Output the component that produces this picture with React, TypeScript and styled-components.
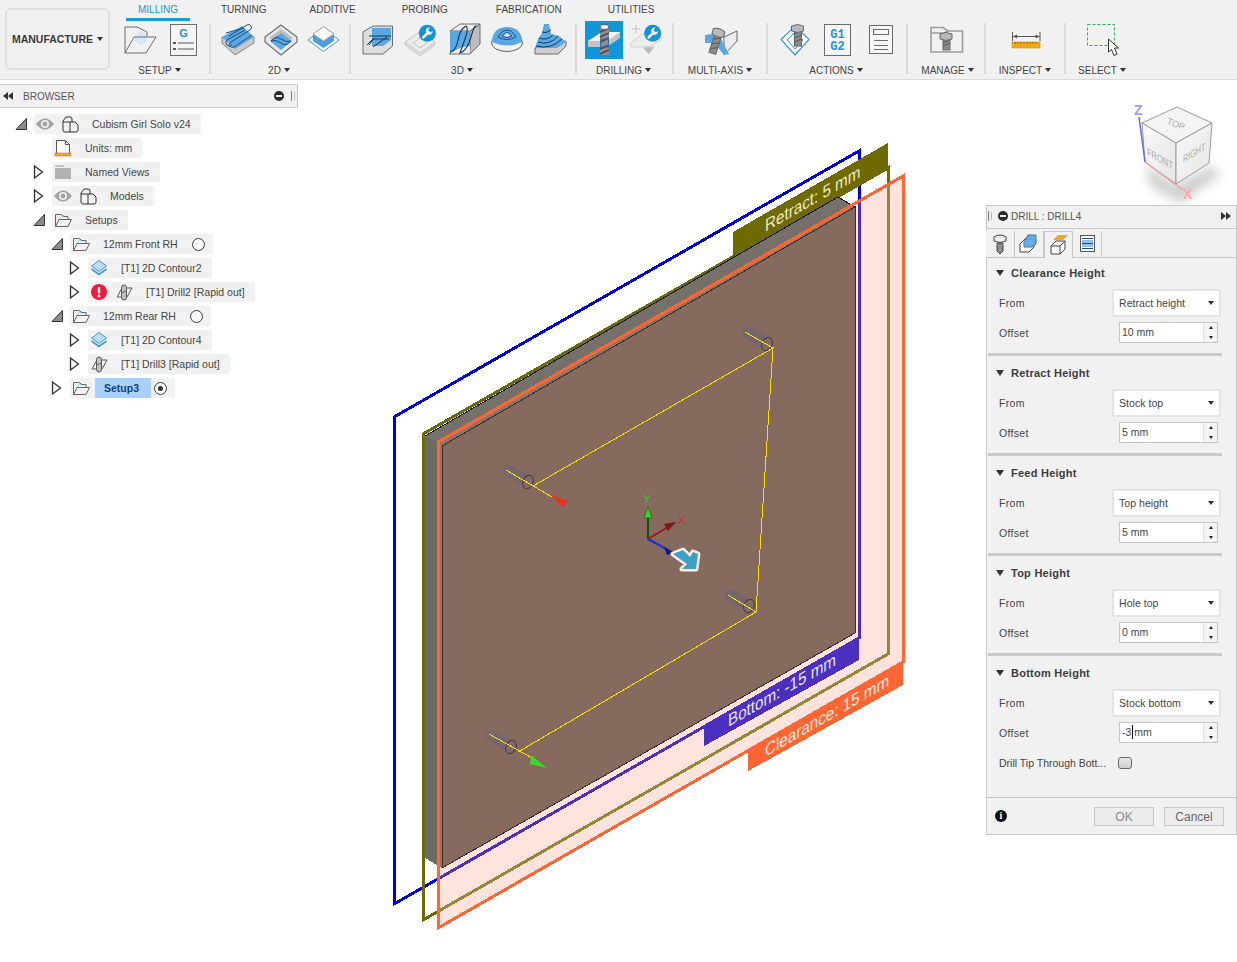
import React from 'react';
import styled, { createGlobalStyle } from 'styled-components';

const GlobalStyle = createGlobalStyle`
	html, body {
		margin: 0;
		padding: 0;
		background: #fff;
		font-family: 'Liberation Sans', Arial, sans-serif;
	}
`;

const Page = styled.div`
	width: 1237px;
	height: 962px;
	overflow: hidden;
	color: #3d3d3d;
`;

/* toolbar */
const Toolbar = styled.div`
	display: flex;
	height: 79px;
	background: #f1f1f1;
	border-bottom: 1px solid #dadada;
`;
const ManufactureButton = styled.div`
	box-sizing: border-box;
	width: 105px;
	height: 62px;
	margin: 8px 3px 0 5px;
	display: flex;
	align-items: center;
	justify-content: center;
	gap: 4px;
	border: 2px solid #dfdfdf;
	border-radius: 6px;
	font-size: 10.5px;
	font-weight: bold;
	color: #3a3a3a;
`;
const ToolbarBody = styled.div`
	display: flex;
	flex-direction: column;
`;
const TabRow = styled.div`
	display: flex;
	gap: 19px;
	height: 22px;
	margin-left: 13px;
`;
const Tab = styled.div<{ $active?: boolean; $shift?: number }>`
	height: 16px;
	margin-left: ${(p) => p.$shift ?? 0}px;
	padding: 2px 12px 0;
	line-height: 16px;
	font-size: 10px;
	color: ${(p) => (p.$active ? '#1a9ad6' : '#444')};
	border-bottom: ${(p) => (p.$active ? '3px solid #1a9ad6' : '3px solid transparent')};
`;
const GroupRow = styled.div`
	display: flex;
`;
const Group = styled.div<{ $width: number }>`
	width: ${(p) => p.$width}px;
	display: flex;
	flex-direction: column;
	align-items: center;
`;
const IconRow = styled.div`
	display: flex;
	gap: 5px;
	height: 38px;
`;
const Slot = styled.svg`
	display: block;
	width: 38px;
	height: 38px;
	overflow: visible;
`;
const GroupLabel = styled.div<{ $shift?: number }>`
	display: flex;
	align-items: center;
	gap: 3px;
	height: 20px;
	margin: 1px 0 0 ${(p) => p.$shift ?? 0}px;
	padding-right: 4px;
	font-size: 10px;
	color: #444;
`;
const Caret = styled.span`
	display: inline-block;
	width: 0;
	height: 0;
	border-left: 3px solid transparent;
	border-right: 3px solid transparent;
	border-top: 4px solid #333;
`;
const Separator = styled.div`
	width: 2px;
	height: 51px;
	margin: 2px 1px 0 -1px;
	background: #dcdcdc;
`;

/* workspace */
const Workspace = styled.div`
	position: relative;
	height: 882px;
`;
const Canvas = styled.svg`
	position: absolute;
	left: 0;
	top: 0;
	width: 1237px;
	height: 882px;
`;

/* browser tree */
const Browser = styled.div`
	position: absolute;
	left: 0;
	top: 4px;
	width: 298px;
`;
const BrowserHeader = styled.div`
	box-sizing: border-box;
	display: flex;
	align-items: center;
	height: 24px;
	padding: 0 2px 0 3px;
	background: #f1f1f1;
	border: 1px solid #c9c9c9;
	border-left: none;
	font-size: 10px;
	color: #555;
`;
const HeaderTitle = styled.span`
	margin-left: 10px;
	flex: 1;
`;
const HeaderGap = styled.span<{ $width: number }>`
	width: ${(p) => p.$width}px;
`;
const Tree = styled.div`
	margin-top: 4px;
`;
const TreeRow = styled.div<{ $indent: number }>`
	display: flex;
	align-items: center;
	height: 24px;
	padding-left: ${(p) => p.$indent}px;
`;
const ToggleCell = styled.div`
	width: 19px;
	flex: none;
`;
const ToggleSvg = styled.svg`
	display: block;
`;
const TreeBlock = styled.div`
	display: flex;
	align-items: center;
	gap: 3px;
	height: 20px;
	background: #f2f2f2;
`;
const TreeGlyph = styled.svg`
	display: block;
	width: 22px;
	height: 20px;
`;
const TreeLabel = styled.span<{ $tail: number }>`
	margin-left: 8px;
	padding-right: ${(p) => p.$tail}px;
	font-size: 10.5px;
	line-height: 20px;
	color: #444;
	white-space: nowrap;
`;
const ActiveLabel = styled.span`
	padding: 0 12px 0 9px;
	font-size: 10.5px;
	font-weight: bold;
	line-height: 20px;
	color: #123c7c;
	background: #a9d1fb;
`;
const Radio = styled.span<{ $on?: boolean }>`
	box-sizing: border-box;
	display: flex;
	align-items: center;
	justify-content: center;
	width: 13px;
	height: 13px;
	margin-right: 8px;
	border: 1px solid #3d3d3d;
	border-radius: 50%;
	background: #fafafa;
	&::after {
		content: '';
		display: ${(p) => (p.$on ? 'block' : 'none')};
		width: 5px;
		height: 5px;
		border-radius: 50%;
		background: #333;
	}
`;

/* drill dialog */
const Panel = styled.div`
	position: absolute;
	left: 986px;
	top: 125px;
	box-sizing: border-box;
	width: 251px;
	height: 630px;
	display: flex;
	flex-direction: column;
	background: #f1f1f1;
	border: 1px solid #c8c8c8;
`;
const PanelHeader = styled.div`
	display: flex;
	align-items: center;
	box-sizing: border-box;
	height: 23px;
	padding: 0 5px 2px 1px;
	border-bottom: 1px solid #c8c8c8;
	font-size: 10px;
	color: #555;
`;
const PanelTitle = styled.span`
	flex: 1;
`;
const PanelTabs = styled.div`
	display: flex;
	height: 28px;
	margin-left: -1px;
	border-bottom: 1px solid #c4c4c4;
`;
const PanelTab = styled.div<{ $active?: boolean }>`
	box-sizing: border-box;
	width: 29px;
	height: ${(p) => (p.$active ? '27px' : '26px')};
	margin-top: 2px;
	margin-bottom: ${(p) => (p.$active ? '-1px' : '0')};
	border-right: 1px solid #c8c8c8;
	border-left: ${(p) => (p.$active ? '1px solid #c8c8c8' : 'none')};
	border-top: ${(p) => (p.$active ? '1px solid #c8c8c8' : 'none')};
	background: #f1f1f1;
`;
const Section = styled.div`
	padding-top: 5px;
`;
const SectionHead = styled.div`
	display: flex;
	align-items: center;
	gap: 7px;
	height: 20px;
	margin: 0 0 6px 9px;
	font-size: 11px;
	font-weight: bold;
	letter-spacing: 0.25px;
	color: #3d3d3d;
`;
const SectionCaret = styled.span`
	width: 0;
	height: 0;
	border-left: 4.5px solid transparent;
	border-right: 4.5px solid transparent;
	border-top: 6px solid #333;
`;
const FieldRow = styled.div<{ $height: number; $gap?: number }>`
	display: flex;
	align-items: center;
	height: ${(p) => p.$height}px;
	margin-top: ${(p) => p.$gap ?? 0}px;
	padding-left: 12px;
	font-size: 10.5px;
	color: #444;
`;
const FieldLabel = styled.span<{ $tight?: boolean }>`
	width: 113px;
	flex: none;
	letter-spacing: ${(p) => (p.$tight ? '0' : '0.3px')};
	white-space: nowrap;
`;
const SelectBox = styled.div`
	box-sizing: border-box;
	display: flex;
	align-items: center;
	justify-content: space-between;
	width: 109px;
	height: 28px;
	padding: 0 5px 0 5px;
	background: #fff;
	border: 2px solid #e4e4e4;
	border-radius: 2px;
	letter-spacing: 0.05px;
`;
const NumberBox = styled.div`
	box-sizing: border-box;
	display: flex;
	align-items: center;
	width: 99px;
	height: 21px;
	margin-left: 7px;
	padding-left: 2px;
	background: #fff;
	border: 1px solid #c6c6c6;
`;
const NumberValue = styled.span`
	flex: 1;
	display: flex;
	align-items: center;
	padding-bottom: 1px;
	white-space: pre;
`;
const TextCursor = styled.span`
	width: 1px;
	height: 14px;
	margin: 0 1px;
	background: #111;
`;
const Spinner = styled.div`
	width: 13px;
	height: 19px;
	display: flex;
	flex-direction: column;
	border-left: 1px solid #e2e2e2;
	background: #f4f4f4;
`;
const SpinCell = styled.div`
	flex: 1;
	display: flex;
	align-items: center;
	justify-content: center;
`;
const SpinUp = styled.span`
	border-left: 2.5px solid transparent;
	border-right: 2.5px solid transparent;
	border-bottom: 3px solid #222;
`;
const SpinDown = styled.span`
	border-left: 2.5px solid transparent;
	border-right: 2.5px solid transparent;
	border-top: 3px solid #222;
`;
const Divider = styled.div`
	height: 3px;
	margin: 10px 14px 2px 1px;
	background: #c9c9c9;
`;
const CheckBox = styled.span`
	box-sizing: border-box;
	width: 14px;
	height: 12px;
	margin-left: 6px;
	border: 1px solid #666;
	border-radius: 3px;
	background: linear-gradient(#e8e8e8, #cfcfcf);
`;
const Footer = styled.div`
	margin-top: auto;
	display: flex;
	align-items: center;
	height: 37px;
	padding: 0 12px 0 8px;
	box-sizing: border-box;
	border-top: 1px solid #c2c2c2;
`;
const InfoDot = styled.span`
	width: 12px;
	height: 12px;
	border-radius: 50%;
	background: #111;
	color: #fff;
	font-size: 10px;
	font-weight: bold;
	line-height: 12px;
	text-align: center;
	font-family: 'Liberation Serif', serif;
`;
const FooterButton = styled.div<{ $disabled?: boolean }>`
	box-sizing: border-box;
	width: 60px;
	height: 19px;
	margin-left: ${(p) => (p.$disabled ? 'auto' : '10px')};
	border: 1px solid #c6c6c6;
	background: #ececec;
	font-size: 12px;
	line-height: 18px;
	text-align: center;
	color: ${(p) => (p.$disabled ? '#8a8a8a' : '#666')};
`;

const BLUE = '#5aa7e2';
const DEEP = '#1c4f80';
const LINE = '#6c6c6c';

function Wrench({ x, y }: { x: number; y: number }) {
	return (
		<g transform={`translate(${x} ${y})`}>
			<circle r="8.5" fill="#1593d8" />
			<path d="M-4 4 L1 -1" stroke="#fff" strokeWidth="2.6" strokeLinecap="round" />
			<path d="M4.6 -4.6 L2 -2 L0.6 -3.2 L2.8 -5.6 A3.6 3.6 0 0 0 -1.4 -1 L1 1.4 A3.6 3.6 0 0 0 5.4 -2.8 L3.4 -0.6 L2 -2 Z" fill="#fff" />
		</g>
	);
}

function Bolt({ x, y, h }: { x: number; y: number; h: number }) {
	return (
		<g transform={`translate(${x} ${y})`}>
			<rect x="-3" y="4" width="7" height={h} fill="#8c8c8c" stroke="#666" />
			<path d={`M-3 ${h * 0.5} l7 -3 M-3 ${h * 0.75} l7 -3 M-3 ${h} l7 -3`} stroke="#555" />
			<path d="M-6 0 Q0 -3 6 0 V5 Q0 8 -6 5 Z" fill="#b9b9b9" stroke="#666" />
		</g>
	);
}

function SetupFolderIcon() {
	return (
		<Slot viewBox="0 0 38 38">
			<path d="M14 14 L20 10 L26 14 V20 L20 24 L14 20 Z" fill="#d6e6f4" />
			<path d="M4 6 H16 L26 11 V15 M4 6 V32 H25 L35 16 H13 L4 32" fill="none" stroke={LINE} />
		</Slot>
	);
}
function NcIcon() {
	return (
		<Slot viewBox="0 0 38 38">
			<rect x="6.5" y="3.5" width="26" height="31" fill="#f5f5f5" stroke={LINE} />
			<text x="19.5" y="16" textAnchor="middle" fontSize="11" fontWeight="bold" fill="#1f93e6" fontFamily="'Liberation Sans', sans-serif">G</text>
			<rect x="9" y="21" width="3" height="2" fill="#555" />
			<rect x="9" y="27" width="3" height="2" fill="#555" />
			<path d="M14 22 H30 M14 28 H30" stroke="#555" />
		</Slot>
	);
}
function AdaptiveIcon() {
	return (
		<Slot viewBox="0 0 38 38">
			<path d="M3 16 V22 L16 34 L35 22 V16 Z" fill="#c9c9c9" stroke="#8a8a8a" />
			<path d="M3 16 L23 5 L35 16 L16 28 Z" fill={BLUE} />
			<path d="M10 15 L28 4 A2.8 2.8 0 0 1 31 9 L12 21 M7 12 L25 7 M13 24 A3 3 0 0 1 8 19 L26 9 M12 21 A2.8 2.8 0 0 0 15 26 L33 14" fill="none" stroke={DEEP} />
		</Slot>
	);
}
function PocketIcon() {
	return (
		<Slot viewBox="0 0 38 38">
			<path d="M3 16 L19 4 L35 16 V21 L19 34 L3 21 Z" fill="#e8e8e8" stroke="#707070" strokeWidth="1.2" />
			<path d="M7 17 L19 8 L31 17 L19 26 Z" fill="#bdbdbd" />
			<path d="M8 20 L19 12 L30 20 L19 29 Z" fill={BLUE} />
			<path d="M9 20 Q14 14 19 18 T29 20 Q24 26 19 22 T9 20 Z" fill="none" stroke={DEEP} />
		</Slot>
	);
}
function FaceIcon() {
	return (
		<Slot viewBox="0 0 38 38">
			<path d="M3 19 L18.5 30.5 L34 19 L18.5 7 Z" fill="#fff" stroke="#3f98df" />
			<path d="M8 13 V20 L18.5 27 L29 20 V13 L18.5 20 Z" fill="#4f9cdc" />
			<path d="M8 13 L18.5 5.5 L29 13 L18.5 20 Z" fill="#fafafa" stroke="#9a9a9a" />
		</Slot>
	);
}
function ContourBoxIcon() {
	return (
		<Slot viewBox="0 0 38 38">
			<path d="M4 11 L14 5 H33.5 V25 L24 33 H4 Z" fill="#dedede" stroke={LINE} />
			<path d="M13 7 H32 V19 L24 25 H13 Z" fill={BLUE} />
			<path d="M10 15 H32 M8 24 L14 18 H30 M10 24 L15 17 M14 26 L28 16" fill="none" stroke="#14365a" />
		</Slot>
	);
}
function ProjectIcon() {
	return (
		<Slot viewBox="0 0 38 38">
			<path d="M3 21 L18 11 L33 21 V24 L18 35 L3 24 Z" fill="#dedede" stroke="#c8c8c8" />
			<path d="M3 21 L18 11 L33 21 L18 32 Z" fill="#ececec" stroke="#c8c8c8" />
			<path d="M11 22 L18 17 L25 22 L18 27 Z" fill="none" stroke="#c4c4c4" />
			<Wrench x={25.3} y={12.3} />
		</Slot>
	);
}
function ScallopIcon() {
	return (
		<Slot viewBox="0 0 38 38">
			<path d="M15 3 H35 L25 10 H5 Z" fill="#ececec" stroke={LINE} />
			<path d="M25 10 L35 3 V23 L25 33 Z" fill="#bdbdbd" stroke={LINE} />
			<path d="M5 10 H25 V33 H5 Z" fill={BLUE} />
			<path d="M5 33 H25 V25 Q15 25 5 33 Z" fill="#ececec" />
			<path d="M4 33 H25" stroke={LINE} />
			<path d="M5 31 Q11 30 13 19 T21 5 Q24 7 20 18 T15 32 Q22 30 26 16 T31 6" fill="none" stroke="#14365a" strokeWidth="1.1" />
		</Slot>
	);
}
function DomeIcon() {
	return (
		<Slot viewBox="0 0 38 38">
			<ellipse cx="19" cy="22" rx="15.5" ry="8.5" fill="#f1f1f1" stroke="#666" />
			<path d="M3.5 21 Q5 6 19 6 Q33 6 34.5 21 Q19 28 3.5 21 Z" fill={BLUE} />
			<path d="M10 16 Q14 9 19 9 Q24 9 28 16 Q19 21 10 16 Z" fill="none" stroke={DEEP} />
			<path d="M14 15 L19 11 L24 15 Q19 18 14 15 Z" fill="#cfe4f6" stroke={DEEP} />
		</Slot>
	);
}
function StepsIcon() {
	return (
		<Slot viewBox="0 0 38 38">
			<path d="M4 27 V33 H27 L35 25 V20 Z" fill="#cfcfcf" stroke={LINE} />
			<path d="M4 27 L7 18 L11 12 L13 3 H18 L20 13 L28 15 L35 21 L26 27 Z" fill={BLUE} />
			<path d="M8 17 Q16 20 22 14 M7 21 Q18 25 27 15 M5 25 Q20 29 31 18 M11 11 Q15 13 20 9" fill="none" stroke="#14365a" />
		</Slot>
	);
}
function DrillActiveIcon() {
	return (
		<Slot viewBox="0 0 38 38">
			<rect width="38" height="38" fill="#0f97dc" />
			<path d="M3 20 L17 11 H35 V17 L22 26 H3 Z" fill="#c4c4c4" />
			<path d="M3 20 L17 11 H35 L22 20 Z" fill="#f4f4f4" />
			<rect x="15" y="6" width="9" height="16" fill="#8e8e8e" />
			<rect x="15" y="22" width="9" height="12" fill="#8e8e8e" />
			<path d="M15 11 L24 7 M15 16 L24 12 M15 21 L24 17 M15 28 L24 24 M15 33 L24 29" stroke="#4a4a4a" strokeWidth="1.4" />
			<rect x="15.5" y="18" width="8" height="8" fill="none" stroke="#1f6fb0" />
			<ellipse cx="19.5" cy="6" rx="4.5" ry="2.4" fill="#f4f4f4" stroke="#555" />
		</Slot>
	);
}
function DrillDisabledIcon() {
	return (
		<Slot viewBox="0 0 38 38">
			<path d="M8 4 V12 M4 8 H12" stroke="#cfcfcf" strokeWidth="1.5" />
			<path d="M3 22 L14 13 H33 V19 L22 26 H3 Z" fill="#ececec" stroke="#d4d4d4" />
			<path d="M16 26 H26 L21 33 L16 28 Z" fill="#b8b8b8" stroke="#cfcfcf" />
			<Wrench x={24.7} y={12.3} />
		</Slot>
	);
}
function MultiAxisIcon() {
	return (
		<Slot viewBox="0 0 38 38">
			<path d="M22 16 L35 10 V20 L22 34 Z" fill="#ececec" stroke={LINE} />
			<path d="M3 14 L16 12 L27 33 L22 34 L12 22 H3 Z" fill="#5aa7e2" />
			<g transform="rotate(18 16 10)">
				<Bolt x={17} y={9} h={20} />
			</g>
		</Slot>
	);
}
function ActionDrillIcon() {
	return (
		<Slot viewBox="0 0 38 38">
			<path d="M5 18.5 L19 5 L33 18.5 L19 34 Z" fill="#fff" stroke="#3f98df" strokeWidth="1.2" />
			<path d="M11 19 L19 11 L27 19 L19 28 Z" fill="#f6f6f6" stroke="#3f98df" />
			<Bolt x={21.5} y={5} h={16} />
		</Slot>
	);
}
function G1G2Icon() {
	return (
		<Slot viewBox="0 0 38 38">
			<rect x="5.5" y="3.5" width="26" height="31" fill="#f7f7f7" stroke={LINE} />
			<g fontSize="12" fontWeight="bold" fill="#1f93e6" fontFamily="'Liberation Mono', monospace" textAnchor="middle">
				<text x="18.5" y="17">G1</text>
				<text x="18.5" y="29">G2</text>
			</g>
		</Slot>
	);
}
function PostListIcon() {
	return (
		<Slot viewBox="0 0 38 38">
			<rect x="7.5" y="4.5" width="23" height="28" fill="#f7f7f7" stroke={LINE} />
			<rect x="11.5" y="8.5" width="15" height="5" fill="none" stroke={LINE} />
			<path d="M12 19.5 H26 M12 24.5 H26 M12 28.5 H26" stroke={LINE} />
		</Slot>
	);
}
function ManageIcon() {
	return (
		<Slot viewBox="0 0 38 38">
			<path d="M3 31 V6.5 H15 L20 10 H34.5 V31 Z M3 12 H16 L20 10" fill="none" stroke="#9c9c9c" strokeWidth="1.6" />
			<Bolt x={18} y={13} h={12} />
		</Slot>
	);
}
function InspectIcon() {
	return (
		<Slot viewBox="0 0 38 38">
			<path d="M5.5 11 V20 M33 11 V20 M6 15.5 H32.5" stroke="#555" />
			<path d="M6 15.5 L10 13.5 V17.5 Z M32.5 15.5 L28.5 13.5 V17.5 Z" fill="#555" />
			<rect x="5" y="21" width="28" height="6" fill="#f5a61c" stroke="#d88f10" strokeWidth="0.6" />
			<path d="M8 21 V23 M11 21 V22.5 M14 21 V23 M17 21 V22.5 M20 21 V23 M23 21 V22.5 M26 21 V23 M29 21 V22.5" stroke="#7a5200" strokeWidth="0.8" />
		</Slot>
	);
}
function SelectIcon() {
	return (
		<Slot viewBox="0 0 38 38">
			<g transform="translate(-4 0)">
				<rect x="6.5" y="3.5" width="27" height="21" fill="none" stroke="#2bb34f" strokeDasharray="3 2" />
				<path d="M27.5 18 V31 L30.5 28.5 L33 34.5 L36 33 L33.5 27 L37.5 27 Z" fill="#fff" stroke="#333" />
			</g>
		</Slot>
	);
}

function RewindIcon() {
	return (
		<svg width="10" height="8" viewBox="0 0 10 8">
			<path d="M5 0 V8 L0 4 Z M10 0 V8 L5 4 Z" fill="#333" />
		</svg>
	);
}
function ForwardIcon() {
	return (
		<svg width="10" height="8" viewBox="0 0 10 8">
			<path d="M0 0 V8 L5 4 Z M5 0 V8 L10 4 Z" fill="#333" />
		</svg>
	);
}
function MinusDot() {
	return (
		<svg width="10" height="10" viewBox="0 0 10 10">
			<circle cx="5" cy="5" r="5" fill="#2b2b2b" />
			<rect x="2" y="4" width="6" height="2" fill="#eee" />
		</svg>
	);
}
function Grip() {
	return (
		<svg width="4" height="10" viewBox="0 0 4 10">
			<path d="M0.5 0 V10" stroke="#777" />
			<path d="M3.5 1 V9" stroke="#bbb" />
		</svg>
	);
}
function Toggle({ open }: { open?: boolean }) {
	return (
		<ToggleSvg width="13" height="14" viewBox="0 0 13 14">
			{open ? (
				<path d="M1 12.5 L11.5 1.5 V12.5 Z" fill="#8a8a8a" stroke="#333" />
			) : (
				<path d="M1.5 1 L9.5 7 L1.5 13 Z" fill="#f4f4f4" stroke="#333" strokeWidth="1.3" />
			)}
		</ToggleSvg>
	);
}

type GlyphName = 'eye' | 'part' | 'units' | 'folder' | 'open' | 'contour' | 'drill' | 'alert';

function TreeIcon({ name }: { name: GlyphName }) {
	return (
		<TreeGlyph viewBox="0 0 22 20">
			{name === 'eye' && (
				<g>
					<path d="M2 10 Q11 -1 20 10 Q11 21 2 10 Z" fill="#a3a3a3" />
					<circle cx="11" cy="10" r="4" fill="#f2f2f2" />
					<circle cx="11" cy="10" r="2.4" fill="#a3a3a3" />
				</g>
			)}
			{name === 'part' && (
				<path d="M4 16 V7 L7 3 H11 Q13 3 13 5 V8 H16 L19 11 V16 Q19 18 17 18 H6 Q4 18 4 16 Z M4 8 H11 V18 M11 8 H13" fill="none" stroke="#333" strokeLinejoin="round" />
			)}
			{name === 'units' && (
				<g>
					<path d="M4.5 15 V2.5 H13.5 L17.5 6.5 V15 M13.5 2.5 V6.5 H17.5" fill="#fafafa" stroke="#555" />
					<rect x="3" y="15" width="16" height="3" fill="#e4b12a" stroke="#a77d10" strokeWidth="0.5" />
				</g>
			)}
			{name === 'folder' && (
				<g>
					<rect x="3" y="3" width="9" height="2" fill="#c4c4c4" />
					<rect x="3" y="6" width="16" height="11" fill="#b2b2b2" />
				</g>
			)}
			{name === 'open' && (
				<g fill="none" stroke="#666">
					<path d="M7 10 Q9 5 13 7" stroke="#9cc8ec" />
					<path d="M3.5 16.5 V4.5 H9 L12 6.5 H16 V9 M3.5 16.5 H16 L19.5 9.5 H7 Z" />
				</g>
			)}
			{name === 'contour' && (
				<g>
					<path d="M3.5 11 L11 16.5 L18.5 11" fill="none" stroke="#3f97da" strokeWidth="1.6" />
					<path d="M11 2.5 L18.5 8 L11 13.5 L3.5 8 Z" fill="#bcdcf5" stroke="#3f97da" />
				</g>
			)}
			{name === 'drill' && (
				<g>
					<path d="M4 15 L9 6 H19 L14 15 Z" fill="#f5f5f5" stroke="#555" />
					<rect x="8.5" y="3" width="5" height="15" rx="2.5" fill="#c0c0c0" stroke="#555" />
					<path d="M8.5 11 L13.5 9" stroke="#666" />
				</g>
			)}
			{name === 'alert' && (
				<g>
					<circle cx="11" cy="10" r="8" fill="#ee1b3c" />
					<rect x="9.8" y="5" width="2.4" height="6.5" rx="1" fill="#fff" />
					<circle cx="11" cy="14" r="1.4" fill="#fff" />
				</g>
			)}
		</TreeGlyph>
	);
}

interface TreeItem {
	indent: number;
	toggle?: 'open' | 'closed';
	icons: GlyphName[];
	label: string;
	radio?: 'off' | 'on';
	active?: boolean;
}

const treeItems: TreeItem[] = [
	{ indent: 15, toggle: 'open', icons: ['eye', 'part'], label: 'Cubism Girl Solo v24' },
	{ indent: 33, icons: ['units'], label: 'Units: mm' },
	{ indent: 33, toggle: 'closed', icons: ['folder'], label: 'Named Views' },
	{ indent: 33, toggle: 'closed', icons: ['eye', 'part'], label: 'Models' },
	{ indent: 33, toggle: 'open', icons: ['open'], label: 'Setups' },
	{ indent: 51, toggle: 'open', icons: ['open'], label: '12mm Front RH', radio: 'off' },
	{ indent: 69, toggle: 'closed', icons: ['contour'], label: '[T1] 2D Contour2' },
	{ indent: 69, toggle: 'closed', icons: ['alert', 'drill'], label: '[T1] Drill2 [Rapid out]' },
	{ indent: 51, toggle: 'open', icons: ['open'], label: '12mm Rear RH', radio: 'off' },
	{ indent: 69, toggle: 'closed', icons: ['contour'], label: '[T1] 2D Contour4' },
	{ indent: 69, toggle: 'closed', icons: ['drill'], label: '[T1] Drill3 [Rapid out]' },
	{ indent: 51, toggle: 'closed', icons: ['open'], label: 'Setup3', radio: 'on', active: true },
];

const sections = [
	{ title: 'Clearance Height', from: 'Retract height', offset: '10 mm' },
	{ title: 'Retract Height', from: 'Stock top', offset: '5 mm' },
	{ title: 'Feed Height', from: 'Top height', offset: '5 mm' },
	{ title: 'Top Height', from: 'Hole top', offset: '0 mm' },
];

const groups = [
	{ label: 'SETUP', width: 97, icons: [SetupFolderIcon, NcIcon] },
	{ label: '2D', width: 138, icons: [AdaptiveIcon, PocketIcon, FaceIcon] },
	{ label: '3D', width: 224, icons: [ContourBoxIcon, ProjectIcon, ScallopIcon, DomeIcon, StepsIcon] },
	{ label: 'DRILLING', width: 95, icons: [DrillActiveIcon, DrillDisabledIcon] },
	{ label: 'MULTI-AXIS', width: 92, icons: [MultiAxisIcon], shift: 2 },
	{ label: 'ACTIONS', width: 138, icons: [ActionDrillIcon, G1G2Icon, PostListIcon] },
	{ label: 'MANAGE', width: 76, icons: [ManageIcon], shift: 5 },
	{ label: 'INSPECT', width: 78, icons: [InspectIcon], shift: 2 },
	{ label: 'SELECT', width: 74, icons: [SelectIcon] },
];

const tabs = [
	{ label: 'MILLING', shift: 0 },
	{ label: 'TURNING', shift: 0 },
	{ label: 'ADDITIVE', shift: 0 },
	{ label: 'PROBING', shift: 3 },
	{ label: 'FABRICATION', shift: 5 },
	{ label: 'UTILITIES', shift: 3 },
];

const bluePts = '394,417 859,151 859,638 394,904';
const olivePts = '423,434 888,168 888,654 423,920';
const planePts = '438,442 903,176 903,662 438,928';

function HoleMark({ x, y }: { x: number; y: number }) {
	return (
		<g>
			<path d={`M${x - 19} ${y - 11} L${x} ${y}`} stroke="#75656f" strokeWidth="12" strokeLinecap="round" />
			<ellipse cx={x} cy={y} rx="5" ry="7" transform={`rotate(25 ${x} ${y})`} fill="#7e6a6a" stroke="#4a3a3c" />
		</g>
	);
}

function Scene() {
	const labelFont = { fontFamily: "'Liberation Sans', sans-serif", fontSize: 16 };
	return (
		<Canvas viewBox="0 80 1237 882">
			<defs>
				<clipPath id="plane">
					<polygon points={planePts} />
				</clipPath>
				<filter id="soft" x="-30%" y="-30%" width="160%" height="160%">
					<feGaussianBlur stdDeviation="6" />
				</filter>
				<linearGradient id="cubeFace" x1="0" y1="0" x2="1" y2="1">
					<stop offset="0" stopColor="#fafafa" />
					<stop offset="1" stopColor="#e4e4e4" />
				</linearGradient>
			</defs>

			<g shapeRendering="crispEdges">
				<polygon points={bluePts} fill="none" stroke="#0000dc" strokeWidth="3" />
				<polygon points={olivePts} fill="none" stroke="#6f6a00" strokeWidth="3" />
				<polygon points="733,232 888,143 888,168 733,257" fill="#6f6a00" />

				<polygon points={planePts} fill="#ffe3dc" />
				<g clipPath="url(#plane)">
					<polygon points={bluePts} fill="none" stroke="#4b30c0" strokeWidth="3" />
					<polygon points={olivePts} fill="none" stroke="#9b8437" strokeWidth="3" />
				</g>

				<polygon points="425,436 838,197 855,207 442,446" fill="#75716a" />
				<polygon points="425,436 442,446 442,868 425,858" fill="#6a6a67" />
				<g clipPath="url(#plane)">
					<polygon points="425,436 838,197 855,207 442,446" fill="#8d7567" />
					<polygon points="425,436 442,446 442,868 425,858" fill="#8d7567" />
				</g>
				<polygon points="442,446 855,207 855,633 442,868" fill="#866a5d" stroke="#3b2a25" />
				<polyline points="425,436 838,197 855,207" fill="none" stroke="#111" />

				<polygon points={planePts} fill="none" stroke="#ff6633" strokeWidth="3" />
				<polygon points="704,726 859,637 859,660 704,746" fill="#4b30c0" />
				<polygon points="748,751 903,662 903,685 748,771" fill="#ff6633" />
			</g>

			<g {...labelFont}>
				<text transform="matrix(0.95 -0.545 0 1.1 765 232)" fill="#ece8cf">Retract: 5 mm</text>
				<text transform="matrix(0.95 -0.545 0 1.1 728 727)" fill="#e8e4f6">Bottom: -15 mm</text>
				<text transform="matrix(0.95 -0.545 0 1.1 765 757)" fill="#ffe9e0">Clearance: 15 mm</text>
			</g>

			<HoleMark x={528} y={482} />
			<HoleMark x={767} y={344} />
			<HoleMark x={749} y={606} />
			<HoleMark x={511} y={747} />

			<g shapeRendering="crispEdges" fill="none" stroke="#f4e300">
				<polyline points="506,470 552,497" />
				<polyline points="533,486 773,348 756,612 518,752" />
				<polyline points="745,332 773,348" />
				<polyline points="728,595 756,612" />
				<polyline points="489,734 532,758" />
			</g>
			<polygon points="551,495 568,501 563,507" fill="#f12b20" />
			<polygon points="531,755 547,768 530,764" fill="#3fd52a" />

			<path d="M648 539 V515" stroke="#15520f" strokeWidth="2" />
			<polygon points="648,507 652,518 644,518" fill="#36d12c" stroke="#15520f" strokeWidth="0.5" />
			<path d="M648 539 L668 527" stroke="#a01818" strokeWidth="2" />
			<polygon points="676,522 664,524 668,531" fill="#7a1a1a" />
			<path d="M648 539 L668 550" stroke="#1a2fd8" strokeWidth="2" />
			<polygon points="676,553 664,547 667,555" fill="#0a1a90" />
			<g fontFamily="'Liberation Sans', sans-serif" fontSize="11">
				<text x="643" y="503" fill="#35c92a">Y</text>
				<text x="678" y="524" fill="#c93030">X</text>
			</g>
			<path d="M673 554 L683 550 L690 557 L693 552 L698 554 L696 569 L682 569 L687 564 Z" fill="#3f9fc6" stroke="#f7ece6" strokeWidth="5" strokeLinejoin="round" paintOrder="stroke" />

			<polygon points="1146,163 1176,186 1212,165 1220,175 1180,203 1150,185" fill="#555" opacity="0.3" filter="url(#soft)" />
			<polygon points="1142,123 1177,107 1212,123 1176,143" fill="#f4f4f4" stroke="#9a9a9a" />
			<polygon points="1142,123 1176,143 1176,184 1145,162" fill="url(#cubeFace)" stroke="#9a9a9a" />
			<polygon points="1176,143 1212,123 1209,163 1176,184" fill="url(#cubeFace)" stroke="#9a9a9a" />
			<path d="M1139 117 L1145 162" stroke="#6a6ae2" strokeWidth="1.5" />
			<path d="M1145 162 L1183 190" stroke="#e6a0a0" strokeWidth="1.5" />
			<g fontFamily="'Liberation Sans', sans-serif" fontSize="10" fill="#ababab">
				<text transform="rotate(22 1168 122) translate(1167 124)" fontSize="9">TOP</text>
				<text transform="matrix(0.75 0.42 0 1.05 1147 155)">FRONT</text>
				<text transform="matrix(0.72 -0.42 0 1.05 1183 163)">RIGHT</text>
			</g>
			<g fontFamily="'Liberation Sans', sans-serif" fontSize="14" fontWeight="bold">
				<text x="1134" y="115" fill="#9a9aff">Z</text>
				<text x="1183" y="199" fill="#ffa8a8">X</text>
			</g>
		</Canvas>
	);
}

function BrowserPanel() {
	return (
		<Browser>
			<BrowserHeader>
				<RewindIcon />
				<HeaderTitle>BROWSER</HeaderTitle>
				<MinusDot />
				<HeaderGap $width={7} />
				<Grip />
			</BrowserHeader>
			<Tree>
				{treeItems.map((item) => (
					<TreeRow key={item.label} $indent={item.indent}>
						<ToggleCell>{item.toggle && <Toggle open={item.toggle === 'open'} />}</ToggleCell>
						<TreeBlock>
							{item.icons.map((icon) => (
								<TreeIcon key={icon} name={icon} />
							))}
							{item.active ? (
								<ActiveLabel>{item.label}</ActiveLabel>
							) : (
								<TreeLabel $tail={item.radio ? 11 : 10}>{item.label}</TreeLabel>
							)}
							{item.radio && <Radio $on={item.radio === 'on'} />}
						</TreeBlock>
					</TreeRow>
				))}
			</Tree>
		</Browser>
	);
}

function Field({ from, offset, cursor }: { from: string; offset: string; cursor?: boolean }) {
	return (
		<>
			<FieldRow $height={28}>
				<FieldLabel>From</FieldLabel>
				<SelectBox>
					{from}
					<Caret />
				</SelectBox>
			</FieldRow>
			<FieldRow $height={21} $gap={5}>
				<FieldLabel>Offset</FieldLabel>
				<NumberBox>
					<NumberValue>
						{cursor ? (
							<>
								-3
								<TextCursor />
								mm
							</>
						) : (
							offset
						)}
					</NumberValue>
					<Spinner>
						<SpinCell>
							<SpinUp />
						</SpinCell>
						<SpinCell>
							<SpinDown />
						</SpinCell>
					</Spinner>
				</NumberBox>
			</FieldRow>
		</>
	);
}

function DrillPanel() {
	return (
		<Panel>
			<PanelHeader>
				<Grip />
				<HeaderGap $width={6} />
				<MinusDot />
				<HeaderGap $width={3} />
				<PanelTitle>DRILL : DRILL4</PanelTitle>
				<ForwardIcon />
			</PanelHeader>
			<PanelTabs>
				<PanelTab>
					<svg width="28" height="24" viewBox="0 0 28 24">
						<path d="M8 6 Q14 2 20 6 V10 Q14 13 8 10 Z" fill="#eee" stroke="#444" />
						<path d="M11 12 H17 V20 L14 23 L11 20 Z" fill="#8a8a8a" stroke="#444" />
					</svg>
				</PanelTab>
				<PanelTab>
					<svg width="28" height="24" viewBox="2 0 28 24">
						<path d="M7 13 L12 8 H21 V16 L16 21 H7 Z" fill="#fafafa" stroke="#444" />
						<path d="M11 11 L15 4 H23 V13 L19 16 H11 Z" fill="#5aa7e2" opacity="0.9" stroke="#2b6ca8" />
					</svg>
				</PanelTab>
				<PanelTab $active>
					<svg width="28" height="24" viewBox="0 0 28 24">
						<path d="M6 14 L11 9 H20 V17 L15 22 H6 Z" fill="#fafafa" stroke="#444" />
						<path d="M6 14 H15 L20 9 M15 14 V22" fill="none" stroke="#444" />
						<path d="M8 8 L13 3 H23 L18 8 Z" fill="#f3a52a" />
					</svg>
				</PanelTab>
				<PanelTab>
					<svg width="28" height="24" viewBox="0 0 28 24">
						<rect x="7.5" y="4.5" width="14" height="16" fill="#fafafa" stroke="#555" />
						<rect x="9" y="9" width="11" height="7" fill="#8fc2ea" />
						<path d="M9 7.5 H20 M9 17.5 H20 M9 12.5 H20" stroke="#1f4f80" />
					</svg>
				</PanelTab>
			</PanelTabs>
			{sections.map((section) => (
				<Section key={section.title}>
					<SectionHead>
						<SectionCaret />
						{section.title}
					</SectionHead>
					<Field from={section.from} offset={section.offset} />
					<Divider />
				</Section>
			))}
			<Section>
				<SectionHead>
					<SectionCaret />
					Bottom Height
				</SectionHead>
				<Field from="Stock bottom" offset="-3 mm" cursor />
				<FieldRow $height={21} $gap={9}>
					<FieldLabel $tight>Drill Tip Through Bott...</FieldLabel>
					<CheckBox />
				</FieldRow>
			</Section>
			<Footer>
				<InfoDot>i</InfoDot>
				<FooterButton $disabled>OK</FooterButton>
				<FooterButton>Cancel</FooterButton>
			</Footer>
		</Panel>
	);
}

export default function App() {
	return (
		<Page>
			<GlobalStyle />
			<Toolbar>
				<ManufactureButton>
					MANUFACTURE
					<Caret />
				</ManufactureButton>
				<ToolbarBody>
					<TabRow>
						{tabs.map((tab, i) => (
							<Tab key={tab.label} $active={i === 0} $shift={tab.shift}>
								{tab.label}
							</Tab>
						))}
					</TabRow>
					<GroupRow>
						{groups.map((group, i) => (
							<React.Fragment key={group.label}>
								{i > 0 && <Separator />}
								<Group $width={group.width}>
									<IconRow>
										{group.icons.map((Icon, n) => (
											<Icon key={n} />
										))}
									</IconRow>
									<GroupLabel $shift={group.shift}>
										{group.label}
										<Caret />
									</GroupLabel>
								</Group>
							</React.Fragment>
						))}
					</GroupRow>
				</ToolbarBody>
			</Toolbar>
			<Workspace>
				<Scene />
				<BrowserPanel />
				<DrillPanel />
			</Workspace>
		</Page>
	);
}
